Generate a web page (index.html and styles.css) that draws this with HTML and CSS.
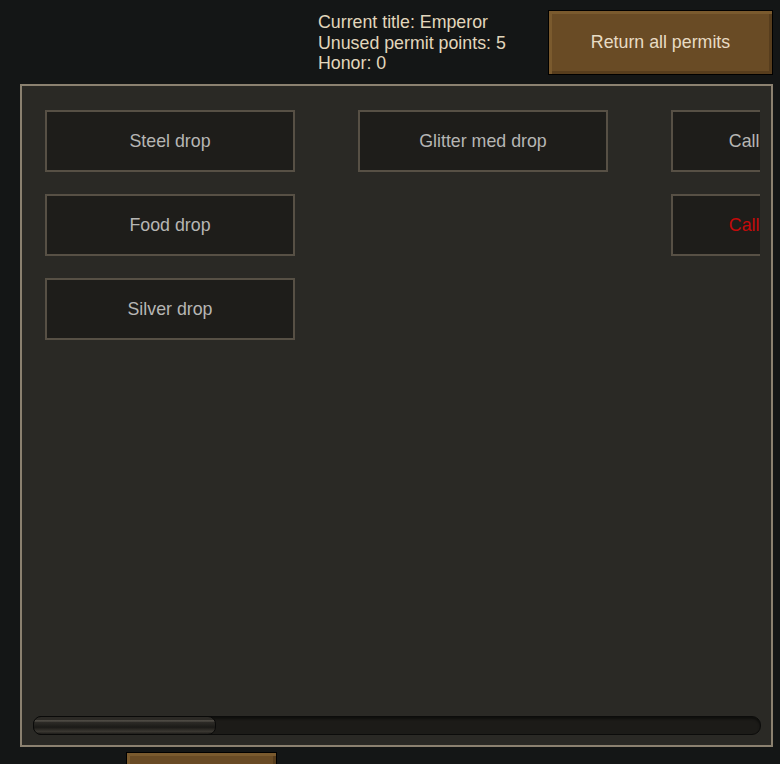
FILE: index.html
```html
<!DOCTYPE html>
<html lang="en">
<head>
  <meta charset="UTF-8" />
  <title>Permits</title>
  <link rel="stylesheet" href="styles.css">
</head>
<body>
  <div class="header">
    <div class="info">
      <div>Current title: Emperor</div>
      <div>Unused permit points: 5</div>
      <div>Honor: 0</div>
    </div>
    <button class="brown-btn return-btn">Return all permits</button>
  </div>

  <div class="panel">
    <div class="tree">
      <div class="column">
        <div class="permit">Steel drop</div>
        <div class="permit">Food drop</div>
        <div class="permit">Silver drop</div>
      </div>
      <div class="column">
        <div class="permit">Glitter med drop</div>
      </div>
      <div class="column">
        <div class="permit">Call janissary aid</div>
        <div class="permit locked">Call janissary aid</div>
      </div>
    </div>
    <div class="scrollbar">
      <div class="thumb"></div>
    </div>
  </div>

  <button class="brown-btn close-btn"></button>
</body>
</html>
```

FILE: styles.css
```css
* {
  box-sizing: border-box;
}

body {
  margin: 0;
  background: #141616;
  font-family: 'Liberation Sans', Arial, sans-serif;
  font-size: 17.8px;
  overflow: hidden;
}

.header {
  height: 84px;
  display: flex;
  justify-content: flex-end;
  align-items: flex-start;
  padding-right: 7px;
}

.info {
  width: 230px;
  margin-top: 12px;
  color: #e2d6bc;
  line-height: 20.5px;
}

.brown-btn {
  background: #694b25;
  border: 1px solid #000;
  box-shadow: inset 3px 3px 0 #7a5a2e, inset -3px -3px 0 #573d1d;
  color: #e8dcc4;
  font-family: inherit;
  font-size: 17.8px;
  padding: 0;
}

.return-btn {
  width: 225px;
  height: 65px;
  margin-top: 10px;
}

.panel {
  margin-left: 20px;
  width: 753px;
  height: 663px;
  background: #2a2925;
  border: 2px solid #8b8170;
  display: flex;
  flex-direction: column;
}

.tree {
  flex: 1;
  display: flex;
  gap: 63px;
  padding: 24px 0 0 23px;
  margin-right: 11px;
  overflow: hidden;
}

.column {
  flex: none;
  width: 250px;
  display: flex;
  flex-direction: column;
  gap: 22px;
}

.permit {
  height: 62px;
  background: #1e1d1a;
  border: 2px solid #575045;
  color: #b6b6b4;
  display: flex;
  align-items: center;
  justify-content: center;
  white-space: nowrap;
}

.permit.locked {
  color: #c40a0a;
}

.scrollbar {
  height: 19px;
  margin: 0 10px 10px 11px;
  background: #1c1b18;
  border: 1px solid #0c0c0b;
  border-radius: 9px;
  box-shadow: inset 0 2px 2px #0f0f0d;
}

.thumb {
  width: 183px;
  height: 19px;
  border-radius: 8px;
  border: 1px solid #0a0a09;
  margin: -1px 0 0 -1px;
  background: linear-gradient(#2c2a26 0, #2c2a26 15%, #55514a 22%, #2c2a26 32%, #1b1a17 60%, #3a3731 85%, #1d1c19 100%);
}

.close-btn {
  display: block;
  margin: 5px 0 0 126px;
  width: 151px;
  height: 40px;
}
```
